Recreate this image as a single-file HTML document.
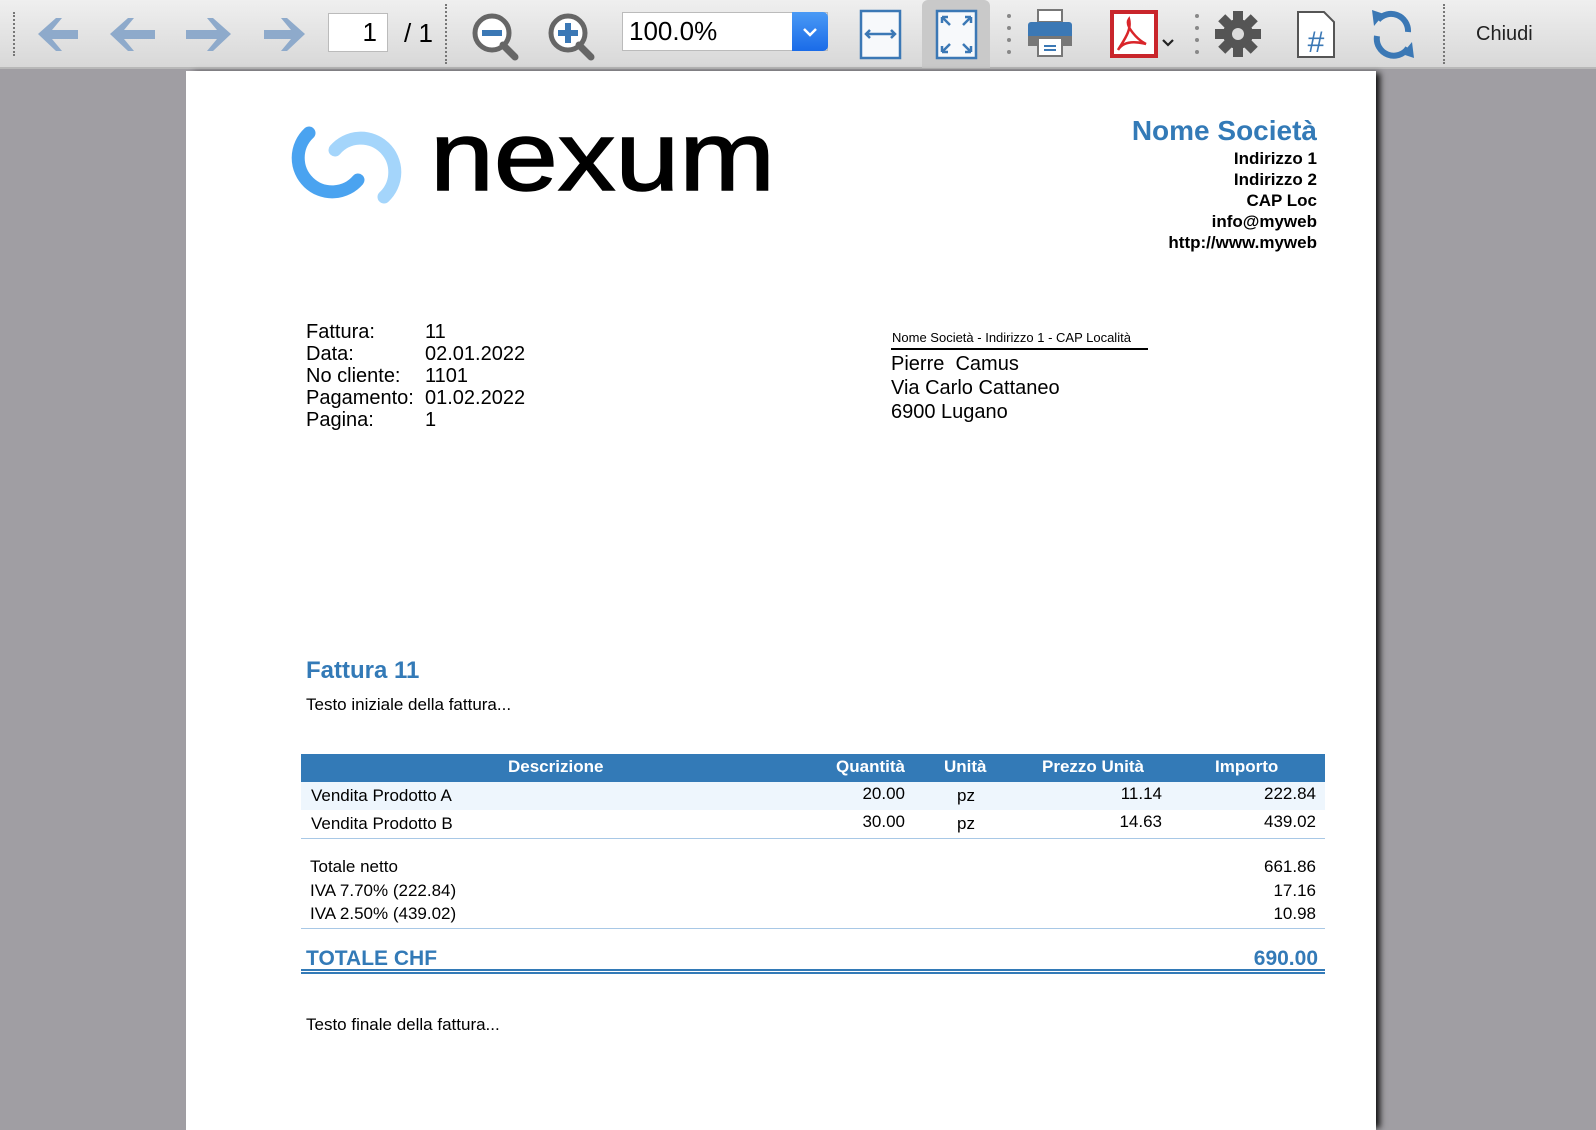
<!DOCTYPE html>
<html><head><meta charset="utf-8">
<style>
*{margin:0;padding:0;box-sizing:border-box}
body{width:1596px;height:1130px;overflow:hidden;background:#a09ea3;font-family:"Liberation Sans",Arial,sans-serif;position:relative}
.tb{position:absolute;left:0;top:0;width:1596px;height:69px;background:linear-gradient(#efefef,#d8d8d8);border-bottom:2px solid #b8b8b8}
.a{position:absolute}
.sep{position:absolute;top:4px;height:60px;border-left:2px dotted #777}
.page{position:absolute;left:186px;top:71px;width:1190px;height:1059px;background:#fff;box-shadow:6px 0 6px -2px #111}
.p{position:absolute;color:#000;white-space:nowrap}
.blue{color:#337ab7}
</style></head><body>
<div class="tb">
  <div class="sep" style="left:13px;top:12px;height:44px"></div>
  <svg class="a" style="left:0;top:0" width="1596" height="69">
    <g fill="#8eaacb">
      <path d="M38 34 L56 18 L62 18 L52 30 L78 30 L78 39 L52 39 L62 51 L56 51 Z"/>
      <path d="M110 34 L128 18 L134 18 L124 30 L155 30 L155 39 L124 39 L134 51 L128 51 Z"/>
      <path d="M231 34 L213 18 L207 18 L217 30 L186 30 L186 39 L217 39 L207 51 L213 51 Z"/>
      <path d="M305 34 L287 18 L281 18 L291 30 L264 30 L264 39 L291 39 L281 51 L287 51 Z"/>
    </g>
    <g>
      <circle cx="492" cy="33" r="17" fill="#fff" stroke="#666" stroke-width="5"/>
      <path d="M503 45 L515 57" stroke="#666" stroke-width="7" stroke-linecap="round"/>
      <rect x="482" y="30" width="20" height="6" fill="#3b78b5"/>
      <circle cx="568" cy="33" r="17" fill="#fff" stroke="#666" stroke-width="5"/>
      <path d="M579 45 L591 57" stroke="#666" stroke-width="7" stroke-linecap="round"/>
      <rect x="558" y="30" width="20" height="6" fill="#3b78b5"/><rect x="565" y="23" width="6" height="20" fill="#3b78b5"/>
    </g>
  </svg>
  <div class="a" style="left:328px;top:13px;width:60px;height:39px;background:#fff;border:1px solid #bbb;font-size:26px;text-align:right;padding-right:10px;line-height:37px">1</div>
  <div class="a" style="left:404px;top:16px;font-size:26px;line-height:34px">/ 1</div>
  <div class="sep" style="left:445px"></div>
  <div class="a" style="left:622px;top:12px;width:206px;height:39px;background:#fff;border:1px solid #bbb;font-size:26px;line-height:37px;padding-left:6px">100.0%</div>
  <div class="a" style="left:792px;top:12px;width:36px;height:39px;background:linear-gradient(#4a9af5,#1a6be8);border-radius:0 5px 5px 0"><svg width="36" height="39"><path d="M12 17 L18 23 L24 17" stroke="#fff" stroke-width="2.5" fill="none"/></svg></div>
  <div class="a" style="left:922px;top:0;width:68px;height:68px;background:#c9c9c9;border-radius:6px 6px 0 0"></div>
  <svg class="a" style="left:0;top:0" width="1596" height="69">
    <rect x="861" y="11" width="39" height="47" fill="#f7f9fb" stroke="#3b78b5" stroke-width="2.5"/>
    <path d="M866 34 H895 M870 30 L866 34 L870 38 M891 30 L895 34 L891 38" stroke="#3b78b5" stroke-width="2.5" fill="none"/>
    <rect x="937" y="11" width="39" height="47" fill="#f7f9fb" stroke="#3b78b5" stroke-width="2.5"/>
    <path d="M942 17 L950 25 M942 17 h6 M942 17 v6 M971 17 L963 25 M971 17 h-6 M971 17 v6 M942 52 L950 44 M942 52 h6 M942 52 v-6 M971 52 L963 44 M971 52 h-6 M971 52 v-6" stroke="#3b78b5" stroke-width="2.5" fill="none"/>
    <g fill="#888"><circle cx="1009" cy="16" r="2"/><circle cx="1009" cy="28" r="2"/><circle cx="1009" cy="40" r="2"/><circle cx="1009" cy="52" r="2"/>
    <circle cx="1197" cy="16" r="2"/><circle cx="1197" cy="28" r="2"/><circle cx="1197" cy="40" r="2"/><circle cx="1197" cy="52" r="2"/></g>
    <rect x="1038" y="10" width="24" height="12" fill="#fff" stroke="#777" stroke-width="2"/>
    <rect x="1028" y="22" width="44" height="20" rx="3" fill="#3b78b5"/>
    <rect x="1028" y="36" width="44" height="10" fill="#777"/>
    <rect x="1038" y="38" width="24" height="18" fill="#fff" stroke="#777" stroke-width="2"/>
    <path d="M1044 46 H1056 M1044 50 H1056" stroke="#3b78b5" stroke-width="2"/>
    <rect x="1112" y="12" width="44" height="44" fill="#fff" stroke="#c9252b" stroke-width="4"/>
    <path d="M1129 19 C1124 26,1138 40,1146 44 C1138 42,1124 40,1118 50 C1124 40,1132 30,1129 19 Z" fill="none" stroke="#d9252a" stroke-width="2.5"/>
    <path d="M1163 40 L1168 45 L1173 40" stroke="#222" stroke-width="2.2" fill="none"/>
    <g transform="translate(1238,34)" fill="#555">
      <circle r="15"/><circle r="6" fill="#dcdcdc"/>
      <g><rect x="-5" y="-23" width="10" height="10"/><rect x="-5" y="13" width="10" height="10"/><rect x="-23" y="-5" width="10" height="10"/><rect x="13" y="-5" width="10" height="10"/>
      <g transform="rotate(45)"><rect x="-5" y="-23" width="10" height="10"/><rect x="-5" y="13" width="10" height="10"/><rect x="-23" y="-5" width="10" height="10"/><rect x="13" y="-5" width="10" height="10"/></g></g>
    </g>
    <path d="M1298 12 H1324 L1334 22 V57 H1298 Z" fill="#fff" stroke="#555" stroke-width="2"/>
    <text x="1316" y="52" font-size="30" fill="#3b78b5" text-anchor="middle" font-family="Liberation Sans">#</text>
    <path d="M1378 20 A17 17 0 0 1 1408 32 M1408 48 A17 17 0 0 1 1377 36" stroke="#3b78b5" stroke-width="6" fill="none"/>
    <path d="M1372 10 L1384 14 L1374 26 Z M1414 58 L1402 54 L1412 42 Z" fill="#3b78b5"/>
  </svg>
  <div class="sep" style="left:1443px"></div>
  <div class="a" style="left:1476px;top:23px;font-size:20px;color:#222">Chiudi</div>
</div>

<div class="page">
  <svg class="a" style="left:0;top:0" width="240" height="150">
    <path d="M123 62 A34 34 0 1 0 172 109" stroke="#4aa3f0" stroke-width="13" fill="none" stroke-linecap="round"/>
    <path d="M149 79 A34 34 0 1 1 198 126" stroke="#a4d5fb" stroke-width="13" fill="none" stroke-linecap="round"/>
  </svg>
  <svg class="a" style="left:240px;top:30px" width="360" height="100">
    <text x="4" y="89" font-family="Liberation Sans" font-size="98" textLength="345" lengthAdjust="spacingAndGlyphs" fill="#000" stroke="#000" stroke-width="1.5">nexum</text>
  </svg>

  <div class="p blue" style="right:59px;top:44px;font-size:28px;font-weight:bold">Nome Società</div>
  <div class="p" style="right:59px;top:77px;font-size:17px;font-weight:bold;line-height:21px;text-align:right">Indirizzo 1<br>Indirizzo 2<br>CAP Loc<br>info@myweb<br>http://www.myweb</div>

  <div class="p" style="left:120px;top:250px;font-size:20px;line-height:22px">Fattura:<br>Data:<br>No cliente:<br>Pagamento:<br>Pagina:</div>
  <div class="p" style="left:239px;top:250px;font-size:20px;line-height:22px">11<br>02.01.2022<br>1101<br>01.02.2022<br>1</div>

  <div class="p" style="left:705px;top:259px;font-size:13px;width:257px;border-bottom:2px solid #000;padding:0 0 3px 1px">Nome Società - Indirizzo 1 - CAP Località</div>
  <div class="p" style="left:705px;top:281px;font-size:20px;line-height:24px">Pierre&nbsp; Camus<br>Via Carlo Cattaneo<br>6900 Lugano</div>

  <div class="p blue" style="left:120px;top:586px;font-size:24px;font-weight:bold">Fattura 11</div>
  <div class="p" style="left:120px;top:624px;font-size:17px">Testo iniziale della fattura...</div>

  <div class="a" style="left:115px;top:683px;width:1024px;height:28px;background:#337ab7;color:#fff;font-weight:bold;font-size:17px">
    <span class="a" style="left:207px;top:3px">Descrizione</span>
    <span class="a" style="right:420px;top:3px">Quantità</span>
    <span class="a" style="left:643px;top:3px">Unità</span>
    <span class="a" style="left:741px;top:3px">Prezzo Unità</span>
    <span class="a" style="left:914px;top:3px">Importo</span>
  </div>
  <div class="a" style="left:115px;top:711px;width:1024px;height:28px;background:#eef6fd"></div>
  <div class="a" style="left:115px;top:767px;width:1024px;border-top:1px solid #a8c8e6"></div>
  <div class="a" style="left:115px;top:857px;width:1024px;border-top:1px solid #a8c8e6"></div>
  <div class="p" style="left:125px;top:711px;font-size:17px;line-height:28px">Vendita Prodotto A<br>Vendita Prodotto B</div>
  <div class="p" style="right:471px;top:709px;font-size:17px;line-height:28px;text-align:right">20.00<br>30.00</div>
  <div class="p" style="left:771px;top:711px;font-size:17px;line-height:28px">pz<br>pz</div>
  <div class="p" style="right:214px;top:709px;font-size:17px;line-height:28px;text-align:right">11.14<br>14.63</div>
  <div class="p" style="right:60px;top:709px;font-size:17px;line-height:28px;text-align:right">222.84<br>439.02</div>

  <div class="p" style="left:124px;top:784px;font-size:17px;line-height:23.5px">Totale netto<br>IVA 7.70% (222.84)<br>IVA 2.50% (439.02)</div>
  <div class="p" style="right:60px;top:784px;font-size:17px;line-height:23.5px;text-align:right">661.86<br>17.16<br>10.98</div>

  <div class="p blue" style="left:120px;top:876px;font-size:21px;font-weight:bold">TOTALE CHF</div>
  <div class="p blue" style="right:58px;top:876px;font-size:21px;font-weight:bold">690.00</div>
  <div class="a" style="left:115px;top:898px;width:1024px;height:5px;border-top:2px solid #337ab7;border-bottom:2px solid #337ab7"></div>

  <div class="p" style="left:120px;top:944px;font-size:17px">Testo finale della fattura...</div>
</div>
</body></html>
